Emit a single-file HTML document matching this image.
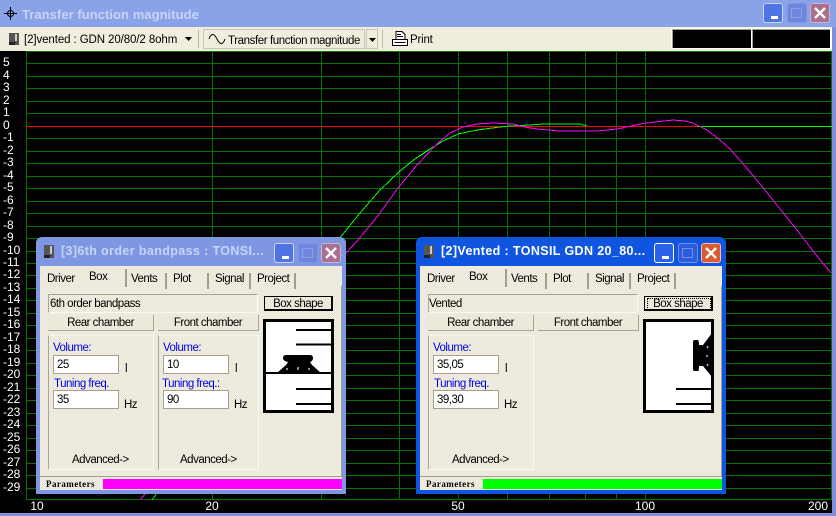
<!DOCTYPE html>
<html><head><meta charset="utf-8"><title>Transfer function magnitude</title>
<style>
html,body{margin:0;padding:0;background:#000}
#p{position:relative;width:836px;height:516px;overflow:hidden;background:#000;font:11.5px/14px "Liberation Sans",sans-serif;letter-spacing:-.5px;color:#000}
#p div,#p svg,#p span{position:absolute}
.t{white-space:nowrap}
.y,.x{color:#fff;font-size:12px;line-height:12px;white-space:nowrap;letter-spacing:0}
.y{left:3px}
.x{top:500px;width:40px;text-align:center}
#tb{left:0;top:0;width:836px;height:27px;background:repeating-conic-gradient(#8da6ea 0 25%,#879fe6 0 50%) 0 0/2px 2px}
#bar{left:0;top:27px;width:832px;height:24px;background:repeating-conic-gradient(#f5f3e6 0 25%,#ebe8d6 0 50%) 0 0/2px 2px}
#rb{left:832px;top:27px;width:4px;height:489px;background:#7f8fdc}
#bb{left:0;top:513px;width:836px;height:3px;background:#7f8fdc}
.btn{width:20px;height:20px;border-radius:3px;box-sizing:border-box;border:1px solid #c9d6f5}
.d{width:310px;height:257px;top:237px;border-radius:6px 6px 0 0;overflow:hidden}
.d.in{background:#7f97e2}
.d.ac{background:#0f55e0}
.body{left:4px;top:29px;width:302px;height:224px;background:repeating-conic-gradient(#f4f2e6 0 25%,#e6e3d4 0 50%) 0 0/2px 2px}
.ttl{left:25px;top:6px;font-weight:bold;font-size:12.5px;line-height:17px;letter-spacing:.38px;white-space:nowrap}
.in .ttl{color:#c6d5f6}.ac .ttl{color:#fff}
.blue{color:#0000e6;white-space:nowrap}
.inp{background:#fff;border:1px solid #aa9f8c;box-sizing:border-box;width:66px;height:19px;padding-left:3px;line-height:18px}
.pb{background:#ece9da;border-right:1px solid #a9a593;border-bottom:1px solid #a9a593;box-sizing:border-box;height:16px;text-align:center;line-height:17px;white-space:nowrap}
.gb{border-left:1px solid #a9a593;border-top:1px solid #f8f7ee;border-right:1px solid #fbfaf2;border-bottom:1px solid #fbfaf2;box-sizing:border-box}
.sep{width:2px;background:#a29e8a;height:16px;top:7px}
.pr{font:bold 9px/11px "Liberation Serif",serif;letter-spacing:.45px;white-space:nowrap}
</style></head>
<body><div id="p">
<svg style="left:0;top:0" width="836" height="516" shape-rendering="crispEdges">
<path fill="none" stroke="#007400" d="M26 51.5H832M26 63.5H832M26 76.5H832M26 88.5H832M26 101.5H832M26 113.5H832M26 138.5H832M26 151.5H832M26 163.5H832M26 176.5H832M26 188.5H832M26 201.5H832M26 213.5H832M26 226.5H832M26 238.5H832M26 251.5H832M26 263.5H832M26 275.5H832M26 288.5H832M26 300.5H832M26 313.5H832M26 325.5H832M26 338.5H832M26 350.5H832M26 363.5H832M26 375.5H832M26 388.5H832M26 400.5H832M26 413.5H832M26 425.5H832M26 438.5H832M26 450.5H832M26 463.5H832M26 475.5H832M26 488.5H832M26 499.5H832
M26.5 51V500M212.5 51V500M321.5 51V500M399.5 51V500M458.5 51V500M507.5 51V500M549.5 51V500M585.5 51V500M616.5 51V500M645.5 51V500M831.5 51V500"/>
<path fill="none" stroke="#0f0" d="M587 126.5H832"/>
<path fill="none" stroke="#f00" d="M27 126.5H697"/>
</svg>
<svg style="left:0;top:0" width="836" height="516" shape-rendering="crispEdges">
<polyline fill="none" stroke="#0f0" points="152,500 338,240 360,213 380,190 400,171 415,159 430,149 443,141 458,134 477,130 500,127 510,126 530,125 543,124 580,124 587,126"/>
<polyline fill="none" stroke="#f0f" points="140,500 346,253 358,240 377,217 398,188 417,165 437,144 450,133 463,127 477,124 493,123 513,124 525,127 537,129 560,131 597,131 617,129 640,124 655,122 673,120 685,121 693,123 707,130 720,140 730,149 745,166 760,184 797,230 813,251 831,273"/>
</svg>
<div class="y" style="top:56px">5</div><div class="y" style="top:69px">4</div><div class="y" style="top:81px">3</div><div class="y" style="top:94px">2</div><div class="y" style="top:106px">1</div><div class="y" style="top:119px">0</div><div class="y" style="top:131px">-1</div><div class="y" style="top:144px">-2</div><div class="y" style="top:156px">-3</div><div class="y" style="top:169px">-4</div><div class="y" style="top:181px">-5</div><div class="y" style="top:194px">-6</div><div class="y" style="top:206px">-7</div><div class="y" style="top:219px">-8</div><div class="y" style="top:231px">-9</div><div class="y" style="top:244px">-10</div><div class="y" style="top:256px">-11</div><div class="y" style="top:268px">-12</div><div class="y" style="top:281px">-13</div><div class="y" style="top:293px">-14</div><div class="y" style="top:306px">-15</div><div class="y" style="top:318px">-16</div><div class="y" style="top:331px">-17</div><div class="y" style="top:343px">-18</div><div class="y" style="top:356px">-19</div><div class="y" style="top:368px">-20</div><div class="y" style="top:381px">-21</div><div class="y" style="top:393px">-22</div><div class="y" style="top:406px">-23</div><div class="y" style="top:418px">-24</div><div class="y" style="top:431px">-25</div><div class="y" style="top:443px">-26</div><div class="y" style="top:456px">-27</div><div class="y" style="top:468px">-28</div><div class="y" style="top:481px">-29</div>
<div class="x" style="left:17px">10</div><div class="x" style="left:192px">20</div><div class="x" style="left:438px">50</div><div class="x" style="left:625px">100</div><div class="x" style="left:798px">200</div>
<div id="rb"></div><div id="bb"></div>

<div id="tb">
<svg style="left:3px;top:6px" width="15" height="15"><path d="M7.5 1V14M1 7.5H14" stroke="#000"/><circle cx="7.5" cy="7.5" r="3" fill="none" stroke="#000"/></svg>
<div class="t" style="left:22px;top:6px;font-weight:bold;font-size:13px;line-height:17px;letter-spacing:.05px;color:#c6d5f6">Transfer function magnitude</div>
<div class="btn" style="left:763px;top:3px;background:#4f74e4"><div style="left:7px;top:12px;width:7px;height:3px;background:#fff"></div></div>
<div class="btn" style="left:787px;top:3px;background:#6f86de;border-color:#7f95e0"><div style="left:3px;top:4px;width:11px;height:10px;border:1px solid #8ea1e6;box-sizing:border-box"></div></div>
<div class="btn" style="left:810px;top:3px;background:#ad6f8e;border-color:#c9b5cf"><svg style="left:2px;top:2px" width="14" height="14"><path d="M2 2L12 12M12 2L2 12" stroke="#fff" stroke-width="2.4"/></svg></div>
</div>

<div id="bar">
<svg style="left:9px;top:6px" width="10" height="12"><path d="M0 0H10V12H0Z" fill="#555"/><path d="M6 1H8V8H6Z" fill="#ccc"/><path d="M0 9H6V12H0Z" fill="#222"/></svg>
<div class="t" style="left:24px;top:6px;letter-spacing:-.1px">[2]vented : GDN 20/80/2 8ohm</div>
<svg style="left:185px;top:10px" width="7" height="5"><path d="M0 0H7L3.5 4Z" fill="#000"/></svg>
<div style="left:198px;top:3px;width:1px;height:18px;background:#bdb9a6"></div>
<div style="left:203px;top:2px;width:162px;height:20px;box-sizing:border-box;border:1px solid #c8c5b2"></div>
<svg style="left:208px;top:5px" width="18" height="14"><path d="M1 7C3 1 6 1 9 7S15 13 17 7" fill="none" stroke="#000"/></svg>
<div class="t" style="left:228px;top:7px;letter-spacing:-.4px">Transfer function magnitude</div>
<div style="left:366px;top:2px;width:12px;height:20px;box-sizing:border-box;border:1px solid #c8c5b2"></div>
<svg style="left:369px;top:11px" width="7" height="5"><path d="M0 0H7L3.5 4Z" fill="#000"/></svg>
<div style="left:382px;top:3px;width:1px;height:18px;background:#bdb9a6"></div>
<svg style="left:391px;top:3px" width="18" height="18" shape-rendering="crispEdges"><path d="M5 1.5H11L14 4.5V9.5H5ZM1.5 9.5H16.5V15.5H1.5ZM3.5 12.5H14.5M6 4.5H10M6 6.5H12" fill="#fff" stroke="#000"/></svg>
<div class="t" style="left:410px;top:6px;letter-spacing:-.2px">Print</div>
<div style="left:671px;top:1px;width:161px;height:21px;background:#fff"></div>
<div style="left:672px;top:2px;width:79px;height:19px;background:#000;border-left:1px solid #a29e8a;border-top:1px solid #a29e8a;box-sizing:border-box"></div>
<div style="left:752px;top:2px;width:78px;height:19px;background:#000;border-left:1px solid #a29e8a;border-top:1px solid #a29e8a;box-sizing:border-box"></div>
</div>

<!-- Dialog 1 -->
<div class="d in" style="left:36px">
<svg style="left:8px;top:8px" width="10" height="13"><path d="M0 0H10V13H0Z" fill="#555"/><path d="M6 1H8V9H6Z" fill="#ccc"/><path d="M0 10H6V13H0Z" fill="#222"/></svg>
<div class="ttl">[3]6th order bandpass : TONSI...</div>
<div class="btn" style="left:238px;top:6px;background:#4f74e4"><div style="left:7px;top:12px;width:7px;height:3px;background:#fff"></div></div>
<div class="btn" style="left:262px;top:6px;background:#6f86de;border-color:#7f95e0"><div style="left:3px;top:4px;width:11px;height:10px;border:1px solid #8ea1e6;box-sizing:border-box"></div></div>
<div class="btn" style="left:285px;top:6px;background:#ad6f8e;border-color:#c9b5cf"><svg style="left:2px;top:2px" width="14" height="14"><path d="M2 2L12 12M12 2L2 12" stroke="#fff" stroke-width="2.4"/></svg></div>
<div class="body">
<div class="t" style="left:7px;top:6px">Driver</div><div class="t" style="left:49px;top:4px">Box</div><div class="t" style="left:91px;top:6px">Vents</div><div class="t" style="left:133px;top:6px">Plot</div><div class="t" style="left:175px;top:6px">Signal</div><div class="t" style="left:217px;top:6px">Project</div>
<div class="sep" style="left:85px;top:3px;height:18px"></div><div class="sep" style="left:125px"></div><div class="sep" style="left:167px"></div><div class="sep" style="left:209px"></div><div class="sep" style="left:254px"></div>
<div style="left:301px;top:20px;width:1px;height:190px;background:#a29e8a"></div>
<div style="left:0;top:210px;width:302px;height:1px;background:#a29e8a"></div>
<div class="gb" style="left:8px;top:28px;width:210px;height:19px;border-top-color:#a9a593;border-left-color:#a9a593"></div>
<div class="t" style="left:10px;top:31px">6th order bandpass</div>
<div class="pb" style="left:224px;top:30px;width:69px;height:15px;border:1px solid #000;border-right-width:2px;border-bottom-width:2px;line-height:14px">Box shape</div>
<div class="pb" style="left:8px;top:49px;width:106px">Rear chamber</div>
<div class="pb" style="left:118px;top:49px;width:101px">Front chamber</div>
<div class="gb" style="left:8px;top:69px;width:106px;height:135px"></div>
<div class="gb" style="left:118px;top:69px;width:101px;height:135px"></div>
<div class="blue" style="left:13px;top:75px">Volume:</div><div class="inp" style="left:13px;top:89px">25</div><div class="t" style="left:85px;top:96px">l</div>
<div class="blue" style="left:14px;top:111px">Tuning freq.</div><div class="inp" style="left:13px;top:124px">35</div><div class="t" style="left:84px;top:132px">Hz</div>
<div class="t" style="left:32px;top:187px">Advanced-&gt;</div>
<div class="blue" style="left:123px;top:75px">Volume:</div><div class="inp" style="left:123px;top:89px">10</div><div class="t" style="left:195px;top:96px">l</div>
<div class="blue" style="left:122px;top:111px">Tuning freq.:</div><div class="inp" style="left:123px;top:124px">90</div><div class="t" style="left:194px;top:132px">Hz</div>
<div class="t" style="left:140px;top:187px">Advanced-&gt;</div>
<svg style="left:223px;top:53px" width="71" height="94"><rect x="1.5" y="1.5" width="68" height="91" fill="#fff" stroke="#000" stroke-width="3"/><path d="M33 11H70M33 25.500H70M33 70H70M33 85H70M0 54H71" stroke="#000" stroke-width="2"/><path d="M23 36H47Q50 36 50 39Q50 42 47 43L49 46L58 54H14L23 46L25 43Q20 42 20 39Q20 36 23 36Z" fill="#000"/><path d="M24 49v2M35 48v3M46 49v2" stroke="#bbb" stroke-width="1.500"/></svg>
</div>
<div class="pr" style="left:10px;top:242px">Parameters</div>
<div style="left:67px;top:242px;width:239px;height:10px;background:#f0f"></div>
</div>

<!-- Dialog 2 -->
<div class="d ac" style="left:416px">
<svg style="left:8px;top:8px" width="10" height="13"><path d="M0 0H10V13H0Z" fill="#555"/><path d="M6 1H8V9H6Z" fill="#ccc"/><path d="M0 10H6V13H0Z" fill="#222"/></svg>
<div class="ttl">[2]Vented : TONSIL GDN 20_80...</div>
<div class="btn" style="left:238px;top:6px;background:#2a62e8;border-color:#fff"><div style="left:7px;top:12px;width:7px;height:3px;background:#fff"></div></div>
<div class="btn" style="left:262px;top:6px;background:#2a5ce0;border-color:#6f8fe8"><div style="left:3px;top:4px;width:11px;height:10px;border:1px solid #6f8fe8;box-sizing:border-box"></div></div>
<div class="btn" style="left:285px;top:6px;background:#dc5a32;border-color:#f0c0b0"><svg style="left:2px;top:2px" width="14" height="14"><path d="M2 2L12 12M12 2L2 12" stroke="#fff" stroke-width="2.4"/></svg></div>
<div class="body">
<div class="t" style="left:7px;top:6px">Driver</div><div class="t" style="left:49px;top:4px">Box</div><div class="t" style="left:91px;top:6px">Vents</div><div class="t" style="left:133px;top:6px">Plot</div><div class="t" style="left:175px;top:6px">Signal</div><div class="t" style="left:217px;top:6px">Project</div>
<div class="sep" style="left:85px;top:3px;height:18px"></div><div class="sep" style="left:125px"></div><div class="sep" style="left:167px"></div><div class="sep" style="left:209px"></div><div class="sep" style="left:254px"></div>
<div style="left:301px;top:20px;width:1px;height:190px;background:#a29e8a"></div>
<div style="left:0;top:210px;width:302px;height:1px;background:#a29e8a"></div>
<div class="gb" style="left:8px;top:28px;width:210px;height:19px;border-top-color:#a9a593;border-left-color:#a9a593"></div>
<div class="t" style="left:9px;top:31px">Vented</div>
<div class="pb" style="left:224px;top:30px;width:69px;height:15px;border:1px solid #000;border-right-width:2px;border-bottom-width:2px;line-height:14px"><span style="left:2px;top:1px;width:62px;height:10px;border:1px dotted #000"></span>Box shape</div>
<div class="pb" style="left:8px;top:49px;width:106px">Rear chamber</div>
<div class="pb" style="left:118px;top:49px;width:101px">Front chamber</div>
<div class="gb" style="left:8px;top:69px;width:106px;height:135px"></div>
<div class="blue" style="left:13px;top:75px">Volume:</div><div class="inp" style="left:13px;top:89px">35,05</div><div class="t" style="left:85px;top:96px">l</div>
<div class="blue" style="left:14px;top:111px">Tuning freq.</div><div class="inp" style="left:13px;top:124px">39,30</div><div class="t" style="left:84px;top:132px">Hz</div>
<div class="t" style="left:32px;top:187px">Advanced-&gt;</div>
<svg style="left:223px;top:53px" width="71" height="94"><rect x="1.5" y="1.5" width="68" height="91" fill="#fff" stroke="#000" stroke-width="3"/><path d="M33 70H70M33 85H70" stroke="#000" stroke-width="2"/><path d="M52 21H55Q56 22 56 26H60L69 14V58L60 47H56Q56 52 55 52H52Q50 52 50 50V23Q50 21 52 21Z" fill="#000"/><path d="M64 29l1-2M63 37h2M64 45l1 2" stroke="#bbb" stroke-width="1.500"/></svg>
</div>
<div class="pr" style="left:10px;top:242px">Parameters</div>
<div style="left:67px;top:242px;width:239px;height:10px;background:#0f0"></div>
</div>
</div></body></html>
